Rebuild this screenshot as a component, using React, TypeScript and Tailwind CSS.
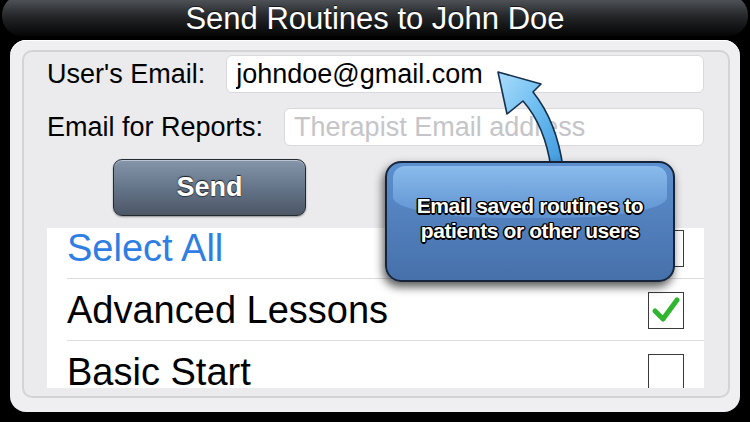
import { useState } from 'react';

const ROUTINES = [
  { label: 'Select All', accent: true },
  { label: 'Advanced Lessons', accent: false },
  { label: 'Basic Start', accent: false },
];

function CheckBox({ checked }: { checked: boolean }) {
  return (
    <div className="w-[36px] h-[37px] border-[1.5px] border-[#3a3a3a] bg-white flex items-center justify-center">
      {checked && (
        <svg width="30" height="28" viewBox="0 0 30 28">
          <path
            d="M4 15 L12 23 L26 4"
            fill="none"
            stroke="#2fb52f"
            strokeWidth="5"
            strokeLinecap="round"
            strokeLinejoin="round"
          />
        </svg>
      )}
    </div>
  );
}

export default function App() {
  const [userEmail, setUserEmail] = useState('johndoe@gmail.com');
  const [reportEmail, setReportEmail] = useState('');
  const [selected] = useState<Record<string, boolean>>({ 'Advanced Lessons': true });

  return (
    <div className="relative w-[750px] h-[422px] overflow-hidden bg-black font-['Liberation_Sans',Arial,sans-serif]">
      {/* Title bar */}
      <div className="mx-[2px] -mt-[5px] h-[41px] rounded-[20px] bg-gradient-to-b from-[#5c6065] via-[#26282b] to-[#060606] flex items-center justify-center pt-[5px]">
        <h1 className="text-white text-[31px] leading-none [text-shadow:0_-1px_0_rgba(0,0,0,0.6)]">
          Send Routines to John Doe
        </h1>
      </div>

      {/* Panel */}
      <div className="mx-[10px] mt-[4px] h-[372px] rounded-[16px] bg-[#efeff1] pl-[12px] pr-[10px] pt-[10px] pb-[14px] shadow-[inset_0_1px_0_#ffffff]">
        <div className="h-full rounded-[10px] border-2 border-[#d3d3d7] bg-[#ebebed] pl-[23px] pr-[24px] pt-[2px] flex flex-col">
          {/* Email fields */}
          <div className="flex items-center gap-[21px]">
            <label className="text-[27px] text-black whitespace-nowrap">User's Email:</label>
            <input
              value={userEmail}
              onChange={(e) => setUserEmail(e.target.value)}
              className="flex-1 h-[38px] rounded-[6px] border border-[#d9d9dd] bg-white pl-[9px] text-[27px] text-black outline-none"
            />
          </div>
          <div className="flex items-center gap-[21px] mt-[12px]">
            <label className="text-[27px] text-black whitespace-nowrap">Email for Reports:</label>
            <input
              value={reportEmail}
              onChange={(e) => setReportEmail(e.target.value)}
              placeholder="Therapist Email address"
              className="flex-1 h-[38px] rounded-[6px] border border-[#d9d9dd] bg-white pl-[9px] text-[27px] text-black outline-none placeholder:text-[#c5c5c9]"
            />
          </div>

          {/* Send button */}
          <button className="mt-[12px] ml-[66px] w-[193px] h-[57px] rounded-[9px] border-[1.5px] border-[#252a31] bg-gradient-to-b from-[#8696aa] via-[#65758a] to-[#4c5766] shadow-[inset_0_1px_0_rgba(255,255,255,0.45),0_1px_2px_rgba(0,0,0,0.4)] text-white text-[27px] font-bold [text-shadow:0_-1px_1px_rgba(0,0,0,0.8),0_1px_1px_rgba(0,0,0,0.5)]">
            Send
          </button>

          {/* Routine list, scrolled a little past the top */}
          <div className="mt-[12px] h-[160px] overflow-hidden bg-white">
            <div className="-mt-[11px]">
              {ROUTINES.map((r, i) => (
                <div key={r.label} className="relative h-[62px] flex items-center pl-[20px] pr-[20px]">
                  <span className={`flex-1 text-[38px] leading-none ${r.accent ? 'text-[#2f7ee3]' : 'text-black'}`}>
                    {r.label}
                  </span>
                  <CheckBox checked={!!selected[r.label]} />
                  {i < ROUTINES.length - 1 && (
                    <div className="absolute left-[20px] right-0 bottom-0 h-px bg-[#dcdcdf]" />
                  )}
                </div>
              ))}
            </div>
          </div>
        </div>
      </div>

      {/* Pointer arrow */}
      <svg className="absolute left-0 top-0 pointer-events-none" width="750" height="422" viewBox="0 0 750 422">
        <defs>
          <linearGradient id="arrowFill" x1="0" y1="0" x2="1" y2="1">
            <stop offset="0" stopColor="#a9dcfb" />
            <stop offset="0.5" stopColor="#6bbcf0" />
            <stop offset="1" stopColor="#3f98dc" />
          </linearGradient>
        </defs>
        <path
          d="M498 72 L541 84 L533 92 Q557 122 563 168 L551 168 Q545 126 523 101 L507 114 Z"
          fill="url(#arrowFill)"
          stroke="#14304d"
          strokeWidth="1.6"
          strokeLinejoin="round"
        />
      </svg>

      {/* Callout */}
      <div className="absolute left-[385px] top-[161px] w-[290px] h-[121px] rounded-[16px] border-2 border-[#15243a] overflow-hidden bg-gradient-to-b from-[#5d90cf] to-[#4670aa] shadow-[-2px_5px_10px_rgba(0,0,0,0.65)]">
        <div className="absolute left-[6px] right-[6px] top-[3px] h-[52px] rounded-t-[12px] rounded-b-[40%] bg-gradient-to-b from-[#8fc0ef] to-[#5f93d2] opacity-90" />
        <div className="relative h-full flex flex-col items-center justify-center pb-[8px] text-white font-bold text-[21px] leading-[25px] tracking-[-0.4px] [text-shadow:1.5px_0_0_#000,-1.5px_0_0_#000,0_1.5px_0_#000,0_-1.5px_0_#000,1px_1px_0_#000,-1px_-1px_0_#000,1px_-1px_0_#000,-1px_1px_0_#000]">
          <span>Email saved routines to</span>
          <span>patients or other users</span>
        </div>
      </div>
    </div>
  );
}
